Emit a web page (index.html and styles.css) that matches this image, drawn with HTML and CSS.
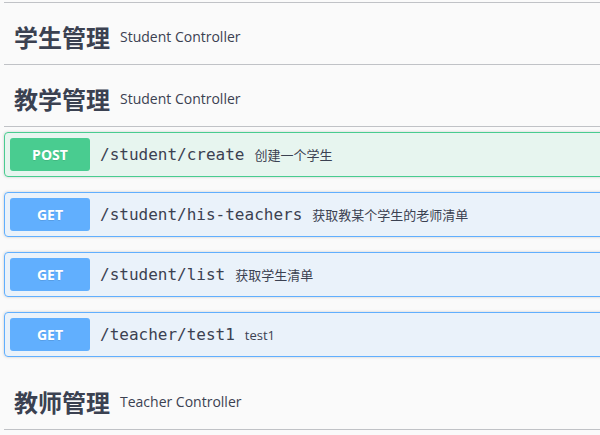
FILE: index.html
```html
<!DOCTYPE html>
<html lang="zh">
<head>
<meta charset="utf-8">
<link rel="stylesheet" href="styles.css">
</head>
<body>
<div class="wrapper">
  <section class="tag-section">
    <h4 class="tag"><span class="tag-name">学生管理</span><small class="tag-desc">Student Controller</small></h4>
  </section>
  <section class="tag-section">
    <h4 class="tag"><span class="tag-name">教学管理</span><small class="tag-desc">Student Controller</small></h4>
    <div class="ops">
      <div class="opblock post">
        <span class="method">POST</span>
        <span class="path">/student/create</span>
        <span class="desc">创建一个学生</span>
      </div>
      <div class="opblock get">
        <span class="method">GET</span>
        <span class="path">/student/his-teachers</span>
        <span class="desc">获取教某个学生的老师清单</span>
      </div>
      <div class="opblock get">
        <span class="method">GET</span>
        <span class="path">/student/list</span>
        <span class="desc">获取学生清单</span>
      </div>
      <div class="opblock get">
        <span class="method">GET</span>
        <span class="path">/teacher/test1</span>
        <span class="desc">test1</span>
      </div>
    </div>
  </section>
  <section class="tag-section">
    <h4 class="tag"><span class="tag-name">教师管理</span><small class="tag-desc">Teacher Controller</small></h4>
  </section>
</div>
</body>
</html>
```
FILE: styles.css
```css
html, body {
  margin: 0;
  padding: 0;
  background: #fafafa;
  overflow: hidden;
}
body {
  font-family: "Open Sans", "Noto Sans CJK SC", sans-serif;
  color: #3b4151;
}
.wrapper {
  width: 640px;
  margin-left: 4px;
  border-top: 1px solid rgba(59, 65, 81, 0.3);
  margin-top: 2px;
}
.tag {
  display: flex;
  align-items: center;
  height: 36px;
  margin: 5px 0 0 0;
  padding: 10px 20px 10px 10px;
  border-bottom: 1px solid rgba(59, 65, 81, 0.3);
  font-weight: 700;
}
.tag-name {
  font-family: "Noto Sans CJK SC", sans-serif;
  font-size: 24px;
  font-weight: 700;
  line-height: 36px;
  color: #3b4151;
  position: relative;
  top: 1px;
}
.tag-desc {
  font-family: "Open Sans", sans-serif;
  font-size: 14px;
  font-weight: 400;
  padding: 0 10px;
  color: #3b4151;
}
.ops {
  padding-top: 5px;
}
.opblock {
  display: flex;
  align-items: center;
  padding: 5px;
  margin-bottom: 15px;
  border: 1px solid;
  border-radius: 4px;
  box-shadow: 0 0 3px rgba(0, 0, 0, 0.19);
}
.opblock:last-child {
  margin-bottom: 16px;
}
.opblock.post {
  background: rgba(73, 204, 144, 0.1);
  border-color: #49cc90;
}
.opblock.get {
  background: rgba(97, 175, 254, 0.1);
  border-color: #61affe;
}
.method {
  box-sizing: border-box;
  width: 80px;
  height: 33px;
  display: flex;
  align-items: center;
  justify-content: center;
  border-radius: 3px;
  color: #fff;
  font-family: "Open Sans", sans-serif;
  font-size: 14px;
  font-weight: 700;
  text-shadow: 0 1px 0 rgba(0, 0, 0, 0.1);
}
.post .method { background: #49cc90; }
.get .method { background: #61affe; }
.path {
  font-family: "DejaVu Sans Mono", monospace;
  font-size: 16px;
  font-weight: 400;
  padding: 0 10px;
  color: #3b4151;
}
.desc {
  font-family: "Open Sans", "Noto Sans CJK SC", sans-serif;
  font-size: 13px;
  color: #3b4151;
}
```
